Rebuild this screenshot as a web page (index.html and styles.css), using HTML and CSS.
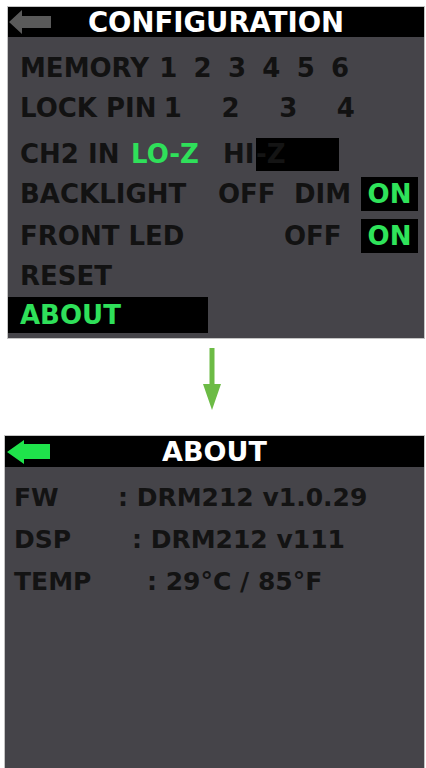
FILE: index.html
```html
<!DOCTYPE html>
<html>
<head>
<meta charset="utf-8">
<link rel="stylesheet" href="styles.css">
</head>
<body>
<div class="screen config">
  <div class="header">
    <svg class="back" width="42" height="24" viewBox="0 0 42 24"><polygon points="0,12 13,0 13,6 42,6 42,18 13,18 13,24" fill="#5a5a5a"/></svg>
    <div class="title">CONFIGURATION</div>
    <div></div>
  </div>
  <div class="rows">
    <div class="row">
      <span class="lbl w-mem">MEMORY</span>
      <span class="opt c-mem">1</span><span class="opt c-mem">2</span><span class="opt c-mem">3</span><span class="opt c-mem">4</span><span class="opt c-mem">5</span><span class="opt c-mem">6</span>
    </div>
    <div class="row">
      <span class="lbl w-lock">LOCK PIN</span>
      <span class="opt c-lock">1</span><span class="opt c-lock">2</span><span class="opt c-lock">3</span><span class="opt c-lock">4</span>
    </div>
    <div class="row gap6">
      <span class="lbl w-ch2">CH2 IN</span>
      <span class="lbl w-loz green">LO-Z</span>
      <span class="lbl w-hi">HI</span><span class="cursor">-Z</span>
    </div>
    <div class="row">
      <span class="lbl w-back">BACKLIGHT</span>
      <span class="lbl w-off1">OFF</span>
      <span class="lbl w-dim">DIM</span>
      <span class="onbox">ON</span>
    </div>
    <div class="row gap2">
      <span class="lbl w-front">FRONT LED</span>
      <span class="lbl w-off2">OFF</span>
      <span class="onbox">ON</span>
    </div>
    <div class="row">
      <span class="lbl">RESET</span>
    </div>
    <div class="row sel">
      <span class="lbl green">ABOUT</span>
    </div>
  </div>
</div>

<div class="between">
  <svg width="20" height="64" viewBox="0 0 20 64"><rect x="7.5" y="0" width="5" height="42" fill="#6cbb45"/><polygon points="1,36 19,36 10,62" fill="#6cbb45"/></svg>
</div>

<div class="screen about">
  <div class="header tall">
    <svg class="back2" width="43" height="24" viewBox="0 0 43 24"><polygon points="0,12 17,0 17,4 43,4 43,19 17,19 17,24" fill="#1fe34b"/></svg>
    <div class="title">ABOUT</div>
    <div></div>
  </div>
  <div class="info">
    <div class="irow"><span class="ilbl w-fw">FW</span><span>: DRM212 v1.0.29</span></div>
    <div class="irow"><span class="ilbl w-dsp">DSP</span><span>: DRM212 v111</span></div>
    <div class="irow"><span class="ilbl w-temp">TEMP</span><span>: 29°C / 85°F</span></div>
  </div>
</div>
</body>
</html>
```

FILE: styles.css
```css
html, body {
  margin: 0;
  padding: 0;
  background: #ffffff;
}
body {
  font-family: "DejaVu Sans", "Liberation Sans", sans-serif;
  font-weight: bold;
  color: #121212;
  overflow: hidden;
  height: 768px;
}
.screen {
  background: #454449;
  border: 1px solid #c4c4c4;
  box-sizing: border-box;
}
.config {
  margin: 6px 1px 0 7px;
  width: 418px;
  padding-bottom: 5px;
}
.header {
  height: 30px;
  background: #000;
  display: grid;
  grid-template-columns: 1fr auto 1fr;
  align-items: center;
  color: #fff;
  font-size: 27.5px;
}
.header.tall {
  height: 31px;
  font-size: 27px;
}
.back {
  margin-left: 1px;
}
.back2 {
  margin-left: 2px;
}
.title {
  line-height: 30px;
}
.rows {
  padding-top: 11px;
  font-size: 26px;
}
.row {
  height: 40px;
  display: flex;
  align-items: center;
  padding-left: 12px;
  white-space: nowrap;
}
.row.gap6 { margin-top: 6px; }
.row.gap2 { margin-top: 2px; }
.row.sel {
  width: 200px;
  height: 36px;
  margin-top: 1px;
  background: #000;
  box-sizing: border-box;
}
.lbl { display: inline-block; }
.opt { display: inline-block; text-align: center; }
.w-mem { width: 131px; }
.c-mem { width: 34.4px; }
.w-lock { width: 124px; }
.c-lock { width: 57.7px; }
.w-ch2 { width: 111px; }
.w-loz { width: 92px; }
.w-hi { width: 33px; }
.cursor {
  display: inline-block;
  width: 83px;
  height: 33px;
  line-height: 33px;
  background: #000;
  color: #141414;
}
.w-back { width: 198px; }
.w-off1 { width: 76px; }
.w-dim { width: 67px; }
.w-front { width: 264px; }
.w-off2 { width: 77px; }
.onbox {
  display: inline-block;
  width: 57px;
  height: 34px;
  line-height: 34px;
  text-align: center;
  background: #000;
  color: #2fe35a;
}
.green { color: #2fe05a; }
.between {
  height: 96px;
  display: flex;
  justify-content: center;
  padding-top: 9px;
  box-sizing: border-box;
  padding-right: 2px;
}
.about {
  margin-left: 4px;
  width: 421px;
  height: 340px;
}
.info {
  padding: 9px 0 0 9px;
  font-size: 25px;
  color: #131313;
}
.irow {
  height: 42px;
  display: flex;
  align-items: center;
  white-space: nowrap;
}
.ilbl { display: inline-block; }
.w-fw { width: 104px; }
.w-dsp { width: 118px; }
.w-temp { width: 133px; }
```
